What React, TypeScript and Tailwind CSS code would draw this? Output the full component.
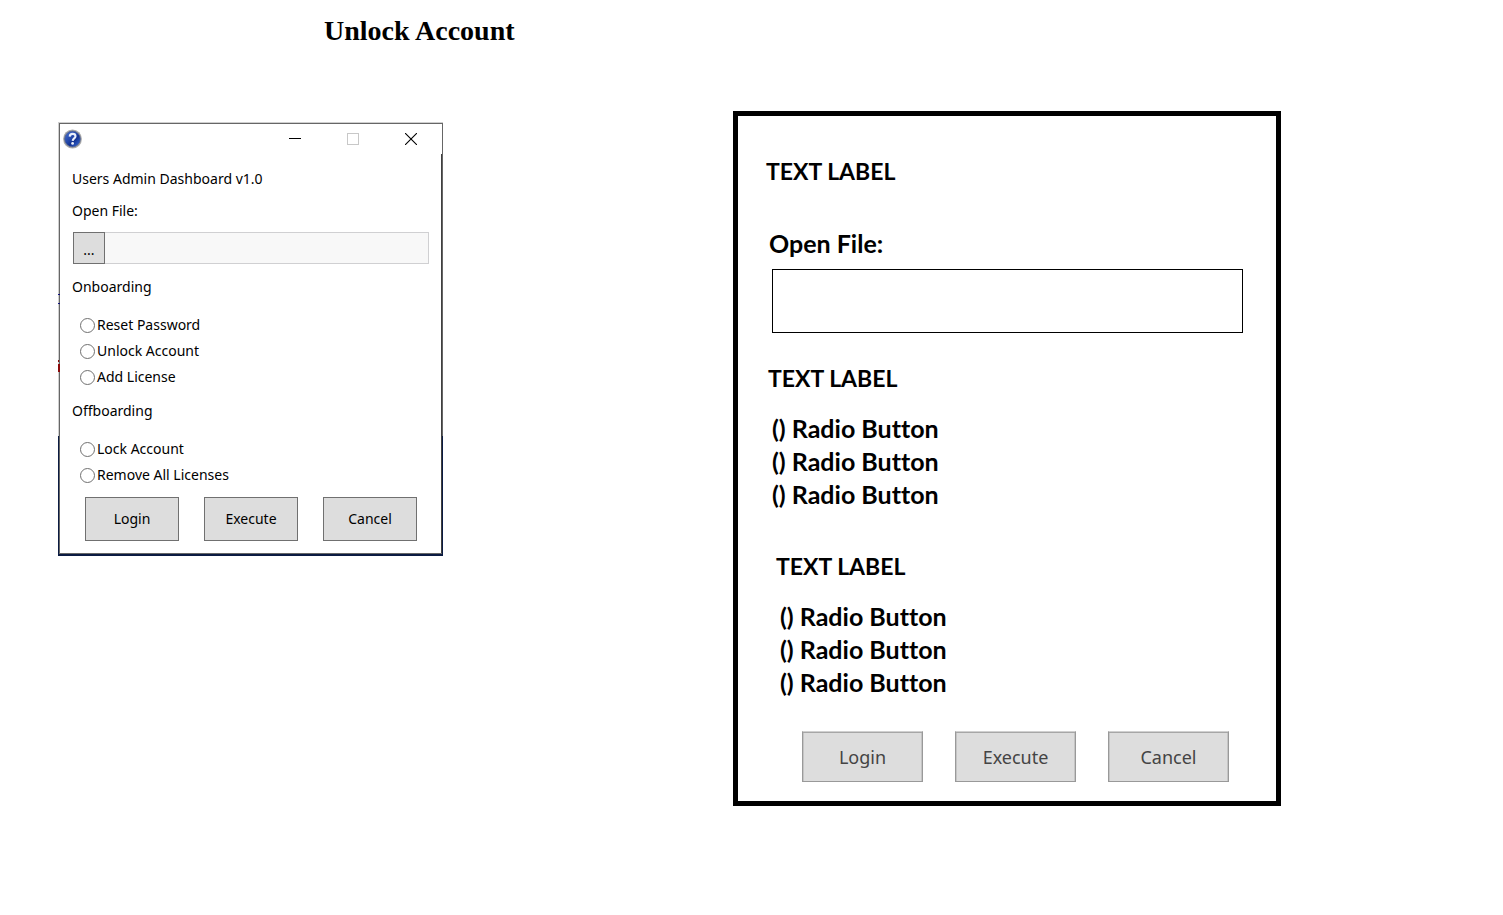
import React from "react";

function HelpIcon() {
  return (
    <svg width="19" height="20" viewBox="0 0 19 20" aria-hidden="true">
      <defs>
        <linearGradient id="ball" x1="0" y1="0" x2="1" y2="1">
          <stop offset="0" stopColor="#4a72cf" />
          <stop offset="0.45" stopColor="#2145a8" />
          <stop offset="0.6" stopColor="#14328f" />
          <stop offset="1" stopColor="#3d74e8" />
        </linearGradient>
      </defs>
      <circle cx="9.5" cy="10" r="9.4" fill="#a9a9a9" />
      <circle cx="9.5" cy="10" r="7.9" fill="url(#ball)" stroke="#56648f" strokeWidth="0.8" />
      <path d="M6.7 7.6C6.8 5.6 8 4.9 9.6 4.9c1.7 0 2.9.9 2.9 2.4 0 2.1-2.6 2.1-2.8 4.5" fill="none" stroke="#e9eefb" strokeWidth="2.1" />
      <circle cx="9.6" cy="14.4" r="1.4" fill="#e9eefb" />
    </svg>
  );
}

function TitleBar() {
  return (
    <div className="flex h-[30px] items-center justify-between pl-[3px] pr-[25px]">
      <HelpIcon />
      <div className="flex gap-[46px]">
        <button type="button" aria-label="Minimize">
          <svg width="12" height="12" viewBox="0 0 12 12" shapeRendering="crispEdges">
            <path d="M0 5.5h12" stroke="#000" />
          </svg>
        </button>
        <button type="button" aria-label="Maximize" disabled>
          <svg width="12" height="12" viewBox="0 0 12 12" shapeRendering="crispEdges">
            <rect x="0.5" y="0.5" width="11" height="11" fill="none" stroke="#c8c8c8" />
          </svg>
        </button>
        <button type="button" aria-label="Close">
          <svg width="12" height="12" viewBox="0 0 12 12">
            <path d="M0 0l12 12M12 0L0 12" stroke="#000" strokeWidth="1.1" />
          </svg>
        </button>
      </div>
    </div>
  );
}

function RadioRow({ label }: { label: string }) {
  return (
    <label className="flex h-[26px] items-center gap-[2px]">
      <input
        type="radio"
        name="action"
        className="size-[15px] appearance-none rounded-full border border-[#707070] bg-white checked:border-4"
      />
      {label}
    </label>
  );
}

function AdminWindow() {
  return (
    <section className="relative mt-[11px] bg-[linear-gradient(#cfcfcf_314px,#0b1b42_314px)] pb-[2px] pl-px pt-px font-['Noto_Sans',sans-serif] text-sm leading-5 text-black">
      <div className="border border-[#666] bg-white">
        <TitleBar />
        <div className="border-r border-[#3f3f3f] pb-3 pl-3 pr-3 pt-[15px]">
          <h2>Users Admin Dashboard v1.0</h2>
          <label htmlFor="file" className="mt-3 block">
            Open File:
          </label>
          <div className="mt-[11px] flex h-8 pl-px">
            <button type="button" className="w-8 border border-[#707070] bg-[#ddd] pt-1">
              ...
            </button>
            <input
              id="file"
              readOnly
              className="min-w-0 flex-1 border border-l-0 border-[#d0d0d2] bg-[#f8f8f8] px-2"
            />
          </div>
          <h3 className="mt-[13px]">Onboarding</h3>
          <div className="mt-[15px] pl-2">
            <RadioRow label="Reset Password" />
            <RadioRow label="Unlock Account" />
            <RadioRow label="Add License" />
          </div>
          <h3 className="mt-[11px]">Offboarding</h3>
          <div className="mt-[15px] pl-2">
            <RadioRow label="Lock Account" />
            <RadioRow label="Remove All Licenses" />
          </div>
          <div className="mt-[9px] grid grid-cols-3 gap-[25px] pl-[13px] pr-3">
            {["Login", "Execute", "Cancel"].map((name) => (
              <button key={name} type="button" className="h-11 border border-[#707070] bg-[#ddd]">
                {name}
              </button>
            ))}
          </div>
        </div>
      </div>
      <span className="absolute left-0 top-[172px] h-[10px] w-[2px] border-y border-[#10107a]" />
      <span className="absolute left-0 top-[238px] h-[2px] w-px bg-[#8b0a0a]" />
      <span className="absolute left-0 top-[242px] h-[8px] w-[2px] bg-[#8b0a0a]" />
      <span className="absolute bottom-0 right-0 top-[314px] w-px bg-[#0b1b42]" />
    </section>
  );
}

function SketchRadios({ group }: { group: string }) {
  return (
    <div className="mt-[17px] flex flex-col items-start pl-1 text-[25px]">
      {[1, 2, 3].map((n) => (
        <label key={n} className="relative block">
          <input type="radio" name={group} className="sr-only" />
          () Radio Button
        </label>
      ))}
    </div>
  );
}

function Wireframe() {
  return (
    <section className="border-[5px] border-black bg-white pb-[19px] pl-7 pr-[33px] pt-[39px] font-['Lato',sans-serif] text-[23px] leading-[33px] font-bold text-black [font-variant-ligatures:none]">
      <h2>TEXT LABEL</h2>
      <label htmlFor="sketch-file" className="mt-[39px] block pl-[3px] text-[25px]">
        Open File:
      </label>
      <div className="mt-[9px] flex pl-[6px]">
        <input id="sketch-file" className="h-16 min-w-0 flex-1 border border-black px-3" />
      </div>
      <div className="mt-[29px] pl-[2px]">
        <h3>TEXT LABEL</h3>
        <SketchRadios group="first" />
      </div>
      <div className="mt-[39px] pl-[10px]">
        <h3>TEXT LABEL</h3>
        <SketchRadios group="second" />
      </div>
      <div className="mt-8 grid grid-cols-3 gap-8 pl-9 pr-[14px] font-['Noto_Sans',sans-serif] text-lg font-normal text-[#444]">
        {["Login", "Execute", "Cancel"].map((name) => (
          <button
            key={name}
            type="button"
            className="h-[51px] border border-[#999] border-t-[#d0d0d0] bg-[#ddd] shadow-[inset_0_1px_0_#a6a6a6,inset_-1px_0_0_#c4c4c4,inset_1px_0_0_#c4c4c4]"
          >
            {name}
          </button>
        ))}
      </div>
    </section>
  );
}

export default function App() {
  return (
    <div className="min-h-screen bg-white text-black">
      <header className="pl-[324px] pt-[14px]">
        <h1 className="font-['Liberation_Serif',serif] text-[28px] leading-[34px] font-bold">Unlock Account</h1>
      </header>
      <main className="mt-[63px] grid grid-cols-[385fr_548fr] items-start gap-x-[290px] pl-[58px] pr-[222px]">
        <AdminWindow />
        <Wireframe />
      </main>
    </div>
  );
}
